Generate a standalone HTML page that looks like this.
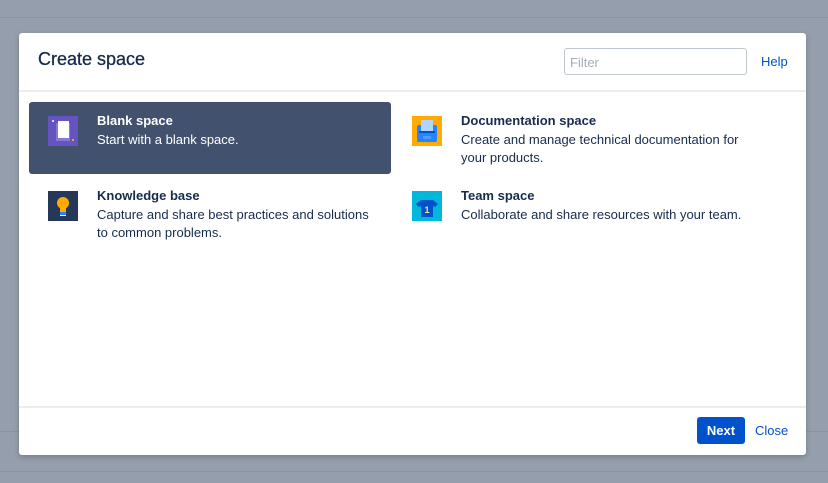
<!DOCTYPE html>
<html><head><style>
body{margin:0;width:828px;height:483px;background:#959eac;font-family:"Liberation Sans",sans-serif;position:relative;overflow:hidden}
.ln{position:absolute;left:0;width:828px;height:1px;background:#8a93a2}
.dlg{position:absolute;left:19px;top:33px;width:787px;height:422px;background:#fff;border-radius:3px;box-shadow:0 2px 6px rgba(0,0,0,.2)}
h1{position:absolute;left:19px;top:16px;margin:0;font-size:18px;font-weight:normal;color:#172b4d;-webkit-text-stroke:0.3px #172b4d}
.filter{position:absolute;left:545px;top:15px;width:183px;height:27px;border:1px solid #c1c7d0;border-radius:3px;box-sizing:border-box;font-size:13px;color:#a5adba;padding:6px 5px}
.help{position:absolute;left:742px;top:21px;font-size:13px;color:#0052cc}
.sep{position:absolute;left:0;width:787px;height:2px;background:#ebecf0}
.item{position:absolute;width:362px;height:72px;border-radius:3px}
.item .ic{position:absolute;left:19px;top:14px;width:30px;height:30px}
.item b{position:absolute;left:68px;top:11px;font-size:13px;color:#172b4d}
.item span{position:absolute;left:68px;top:29px;font-size:13px;line-height:18px;color:#172b4d;width:280px}
.sel{background:#42526e}.sel b,.sel span{color:#fff}
.next{position:absolute;left:678px;top:384px;width:48px;height:27px;background:#0052cc;border-radius:3px;color:#fff;font-weight:bold;font-size:13px;text-align:center;line-height:27px}
.close{position:absolute;left:736px;top:390px;font-size:13px;color:#0052cc}
</style></head><body>
<div class="ln" style="top:17px"></div><div class="ln" style="top:431px"></div><div class="ln" style="top:471px"></div>
<div class="dlg">
<h1>Create space</h1>
<div class="filter">Filter</div>
<div class="help">Help</div>
<div class="sep" style="top:57px"></div>
<div class="item sel" style="left:10px;top:69px"><svg class="ic" viewBox="0 0 30 30"><rect width="30" height="30" fill="#6554c0"/><rect x="8" y="7" width="14" height="18" fill="#8777d9"/><rect x="10" y="5" width="11" height="17" fill="#fff"/><circle cx="5" cy="5" r="1" fill="#fff"/><circle cx="25" cy="24" r="1" fill="#ffc400"/></svg><b>Blank space</b><span>Start with a blank space.</span></div>
<div class="item" style="left:374px;top:69px"><svg class="ic" viewBox="0 0 30 30"><rect width="30" height="30" fill="#ffab00"/><rect x="5" y="9" width="20" height="17" rx="2" fill="#2684ff"/><rect x="9" y="4" width="12" height="12" fill="#b3d4ff"/><rect x="7" y="15" width="16" height="2" fill="#0052cc"/><rect x="11" y="20" width="8" height="3" fill="#4c9aff"/></svg><b>Documentation space</b><span>Create and manage technical documentation for your products.</span></div>
<div class="item" style="left:10px;top:144px"><svg class="ic" viewBox="0 0 30 30"><rect width="30" height="30" fill="#253858"/><circle cx="15" cy="12" r="6" fill="#ffab00"/><rect x="12" y="16" width="6" height="6" fill="#ffab00"/><rect x="12" y="21" width="6" height="3" fill="#2684ff"/><rect x="12" y="24" width="6" height="1" fill="#fff"/></svg><b>Knowledge base</b><span style="width:272px">Capture and share best practices and solutions to common problems.</span></div>
<div class="item" style="left:374px;top:144px"><svg class="ic" viewBox="0 0 30 30"><rect width="30" height="30" fill="#00b8d9"/><path d="M9 9h12l5 4-3 3-2-1v11H9V15l-2 1-3-3z" fill="#0052cc"/><text x="15" y="22" font-size="9" font-weight="bold" fill="#ffe380" text-anchor="middle" font-family="Liberation Sans">1</text></svg><b>Team space</b><span style="width:320px">Collaborate and share resources with your team.</span></div>
<div class="sep" style="top:373px"></div>
<div class="next">Next</div>
<div class="close">Close</div>
</div>
</body></html>
